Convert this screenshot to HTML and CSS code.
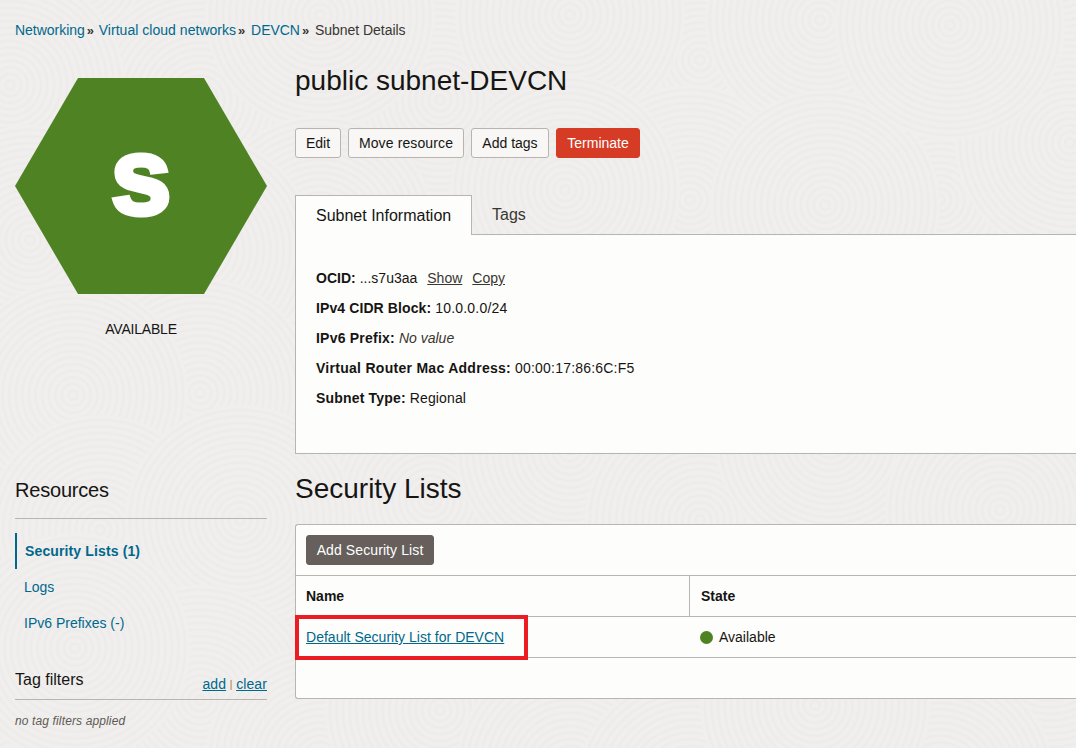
FILE: index.html
```
<!DOCTYPE html>
<html lang="en">
<head>
<meta charset="utf-8">
<title>Subnet Details</title>
<link rel="stylesheet" href="styles.css">
</head>
<body>
<svg class="texture" width="1076" height="748" aria-hidden="true">
  <defs>
    <radialGradient id="rings" gradientUnits="userSpaceOnUse" cx="0" cy="0" r="6.6" spreadMethod="repeat">
      <stop offset="0" stop-color="#f0efed"/><stop offset=".35" stop-color="#f0efee"/><stop offset=".7" stop-color="#ecebea"/><stop offset="1" stop-color="#f0efed"/>
    </radialGradient>
    <circle id="disc" r="115" fill="url(#rings)"/>
  </defs>
  <use href="#disc" x="700" y="60"/><use href="#disc" x="1060" y="-30"/><use href="#disc" x="940" y="200"/>
  <use href="#disc" x="440" y="200"/><use href="#disc" x="300" y="350"/><use href="#disc" x="-10" y="560"/>
  <use href="#disc" x="10" y="760"/><use href="#disc" x="280" y="640"/><use href="#disc" x="1080" y="470"/>
  <use href="#disc" x="900" y="430"/>
  <use href="#disc" x="70" y="-35"/><use href="#disc" x="200" y="100"/><use href="#disc" x="10" y="85"/>
  <use href="#disc" x="440" y="100"/><use href="#disc" x="320" y="15"/><use href="#disc" x="570" y="15"/>
  <use href="#disc" x="690" y="200"/><use href="#disc" x="565" y="190"/><use href="#disc" x="820" y="20"/>
  <use href="#disc" x="825" y="205"/><use href="#disc" x="1070" y="143"/><use href="#disc" x="950" y="25"/>
  <use href="#disc" x="320" y="230"/><use href="#disc" x="200" y="250"/><use href="#disc" x="30" y="240"/>
  <use href="#disc" x="300" y="480"/><use href="#disc" x="200" y="393"/><use href="#disc" x="73" y="395"/>
  <use href="#disc" x="430" y="500"/><use href="#disc" x="570" y="450"/><use href="#disc" x="700" y="520"/>
  <use href="#disc" x="830" y="440"/><use href="#disc" x="1000" y="510"/><use href="#disc" x="100" y="530"/>
  <use href="#disc" x="240" y="520"/><use href="#disc" x="200" y="700"/><use href="#disc" x="75" y="648"/>
  <use href="#disc" x="320" y="760"/><use href="#disc" x="440" y="710"/><use href="#disc" x="570" y="770"/>
  <use href="#disc" x="690" y="790"/><use href="#disc" x="1050" y="650"/><use href="#disc" x="940" y="780"/>
  <use href="#disc" x="815" y="705"/>
</svg>
<div class="page">
  <nav class="crumbs"><a>Networking</a><i>»</i><a>Virtual cloud networks</a><i>»</i><a>DEVCN</a><i>»</i><span>Subnet Details</span></nav>
  <div class="columns">
    <aside class="sidebar">
      <div class="status">
        <div class="hexagon"><span>s</span></div>
        <div class="status-label">AVAILABLE</div>
      </div>
      <h2 class="side-title">Resources</h2>
      <ul class="resources">
        <li class="active">Security Lists (1)</li>
        <li>Logs</li>
        <li>IPv6 Prefixes (-)</li>
      </ul>
      <div class="filters">
        <h3>Tag filters</h3>
        <div class="filter-links"><a>add</a><i>|</i><a>clear</a></div>
      </div>
      <p class="no-filters">no tag filters applied</p>
    </aside>
    <main class="main">
      <h1>public subnet-DEVCN</h1>
      <div class="actions">
        <button class="btn edit">Edit</button>
        <button class="btn move">Move resource</button>
        <button class="btn tags">Add tags</button>
        <button class="btn danger">Terminate</button>
      </div>
      <div class="tabs"><div class="tab current">Subnet Information</div><div class="tab">Tags</div></div>
      <dl class="info">
        <div class="ocid"><dt>OCID:</dt><dd>...s7u3aa</dd><a>Show</a><a>Copy</a></div>
        <div class="cidr"><dt>IPv4 CIDR Block:</dt><dd>10.0.0.0/24</dd></div>
        <div class="prefix"><dt>IPv6 Prefix:</dt><dd class="empty">No value</dd></div>
        <div class="mac"><dt>Virtual Router Mac Address:</dt><dd>00:00:17:86:6C:F5</dd></div>
        <div class="type"><dt>Subnet Type:</dt><dd>Regional</dd></div>
      </dl>
      <h1 class="lists-title">Security Lists</h1>
      <section class="panel">
        <div class="toolbar"><button class="btn dark">Add Security List</button></div>
        <div class="row head"><div class="cell">Name</div><div class="cell">State</div></div>
        <div class="row">
          <div class="cell"><a>Default Security List for DEVCN</a><span class="highlight"></span></div>
          <div class="cell"><span class="dot"></span>Available</div>
        </div>
        <div class="foot"></div>
      </section>
    </main>
  </div>
</div>
</body>
</html>
```
FILE: styles.css
```
* { box-sizing: border-box; }
body {
  margin: 0;
  height: 748px;
  overflow: hidden;
  background: #f0efed;
  color: #161513;
  font: 14px/20px "Liberation Sans", Arial, sans-serif;
}
h1, h2, h3, p, ul, dl, dd { margin: 0; padding: 0; font-weight: 400; }
.texture { position: absolute; inset: 0; z-index: -1; }
.page { padding: 20px 0 0 15px; }
.crumbs { display: flex; height: 20px; color: #3a3631; white-space: nowrap; letter-spacing: -.03px; }
.crumbs a { color: #00688c; }
.crumbs a:nth-of-type(2) { letter-spacing: .03px; }
.crumbs i { width: 15px; padding-left: 2px; font-style: normal; font-weight: 700; font-size: 13px; line-height: 22px; }
.crumbs i:first-of-type { width: 14px; }
.columns { display: grid; grid-template-columns: 252px 1fr; column-gap: 28px; }

.status { height: 433px; padding-top: 38px; text-align: center; }
.hexagon {
  height: 216px;
  display: flex;
  align-items: center;
  justify-content: center;
  background: #4f8223;
  clip-path: polygon(25% 0, 75% 0, 100% 50%, 75% 100%, 25% 100%, 0 50%);
}
.hexagon span {
  font: 700 109px/130px "Liberation Sans", Arial, sans-serif;
  color: #fff;
  padding-bottom: 20px;
  -webkit-text-stroke: 5px #fff;
}
.status-label { margin-top: 25px; letter-spacing: -.2px; }
.side-title { height: 46px; padding-top: 5px; font-size: 20px; line-height: 24px; letter-spacing: -.2px; border-bottom: 1px solid #b8b5b0; }
.resources { list-style: none; padding-top: 14px; }
.resources li { height: 36px; padding-left: 9px; line-height: 36px; color: #00688c; }
.resources .active { border-left: 2px solid #00688c; padding-left: 8px; font-weight: 700; letter-spacing: .13px; }
.filters { display: flex; justify-content: space-between; height: 59px; padding-top: 28px; border-bottom: 1px solid #b8b5b0; }
.filters h3 { font-size: 16px; line-height: 22px; }
.filter-links { display: flex; padding-top: 5px; }
.filter-links a { color: #00688c; text-decoration: underline; letter-spacing: .1px; }
.filter-links i { width: 10px; text-align: center; font-style: normal; font-size: 10px; line-height: 22px; color: #a8672a; }
.no-filters { padding-top: 11px; font-size: 12px; font-style: italic; letter-spacing: .13px; color: #5f5a55; }

.main h1 { font-size: 28px; line-height: 32px; margin-top: 25px; }
.actions { display: flex; gap: 7px; margin-top: 31px; }
.btn {
  height: 30px;
  padding: 0;
  border: 1px solid #b8b5b0;
  border-radius: 3px;
  background: #f8f7f5;
  color: #161513;
  font: inherit;
}
.edit { width: 46px; }
.move { width: 116px; letter-spacing: .12px; }
.tags { width: 78px; }
.danger { width: 84px; background: #d63b25; border-color: #d63b25; color: #fff; }
.dark { width: 128px; background: #665f5b; border-color: #665f5b; color: #fff; letter-spacing: .1px; }
.tabs { display: flex; height: 40px; margin-top: 37px; font-size: 16px; line-height: 40px; }
.tab { flex: 1; padding-left: 20px; border-bottom: 1px solid #b8b5b0; color: #3a3631; }
.current { flex: 0 0 177px; color: #161513; background: #fdfdfb; border: 1px solid #b8b5b0; border-bottom: 0; }
.info { height: 219px; padding: 28px 20px; background: #fdfdfb; border: 1px solid #b8b5b0; border-width: 0 0 1px 1px; }
.info div { display: flex; height: 30px; line-height: 30px; }
.info dt { font-weight: 700; margin-right: 4px; }
.info a { margin-left: 10px; color: #3a3631; text-decoration: underline; }
.info .empty { font-style: italic; color: #3a3631; }
.cidr dt { letter-spacing: .1px; }
.cidr dd { letter-spacing: .2px; }
.prefix dt { letter-spacing: .22px; }
.mac dt { letter-spacing: .28px; }
.mac dd { letter-spacing: .2px; }
.type dt { letter-spacing: .18px; }
.type dd { letter-spacing: .12px; }
.main .lists-title { margin-top: 19px; }
.panel { margin-top: 19px; background: #fdfdfb; border: 1px solid #b8b5b0; border-right: 0; border-radius: 3px 0 0 3px; }
.toolbar { height: 50px; padding: 10px; }
.row { display: grid; grid-template-columns: 394px 1fr; height: 41px; border-top: 1px solid #b8b5b0; line-height: 40px; }
.cell { position: relative; display: flex; align-items: center; padding-left: 10px; }
.cell a { color: #00688c; text-decoration: underline; letter-spacing: .02px; }
.head { font-weight: 700; }
.head .cell + .cell { border-left: 1px solid #b8b5b0; margin-left: -1px; padding-left: 11px; }
.highlight { position: absolute; left: -1px; top: -2px; width: 233px; height: 45px; border: 4px solid #ec1c24; z-index: 1; }
.dot { width: 13px; height: 13px; margin-right: 6px; border-radius: 50%; background: #4f8223; }
.foot { height: 41px; border-top: 1px solid #b8b5b0; }
```
